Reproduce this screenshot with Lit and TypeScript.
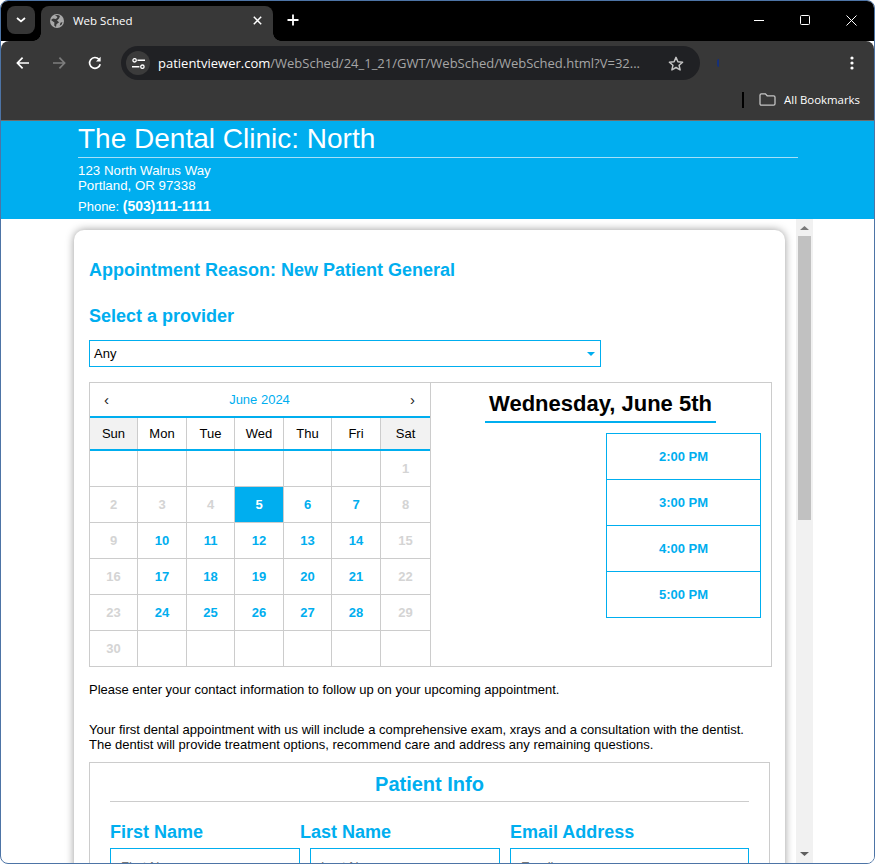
import { LitElement, html, css, svg } from "lit";
import { customElement } from "lit/decorators.js";

const WEEKDAYS = ["Sun", "Mon", "Tue", "Wed", "Thu", "Fri", "Sat"];
const ROWS: (string | number)[][] = [
  ["", "", "", "", "", "", 1],
  [2, 3, 4, 5, 6, 7, 8],
  [9, 10, 11, 12, 13, 14, 15],
  [16, 17, 18, 19, 20, 21, 22],
  [23, 24, 25, 26, 27, 28, 29],
  [30, "", "", "", "", "", ""],
];
const ACTIVE = new Set([5, 6, 7, 10, 11, 12, 13, 14, 17, 18, 19, 20, 21, 24, 25, 26, 27, 28]);
const TIMES = ["2:00 PM", "3:00 PM", "4:00 PM", "5:00 PM"];

@customElement("app-root")
export class AppRoot extends LitElement {
  static styles = css`
    :host { display: block; width: 875px; height: 864px; overflow: hidden; background: #fff; font-family: "Liberation Sans", Arial, sans-serif; }
    * { box-sizing: border-box; }
    svg { display: block; flex: none; }
    .window { width: 875px; height: 864px; border: 1px solid #4d74a6; border-radius: 8px; overflow: hidden; display: flex; flex-direction: column; background: #fff; }

    .strip { height: 40px; flex: none; background: #000; display: flex; align-items: flex-start; padding: 5px 0 0 6px; font-family: "Open Sans", "Noto Sans", sans-serif; color: #fff; }
    .tabsearch { width: 28px; height: 28px; border-radius: 8px; background: #363636; display: flex; align-items: center; justify-content: center; margin-right: 6px; }
    .tab { position: relative; width: 232px; height: 35px; background: #383838; border-radius: 8px 8px 0 0; display: flex; align-items: center; padding: 0 11px 6px 9px; font-size: 11.5px; }
    .tab::before, .tab::after { content: ""; position: absolute; bottom: 0; width: 8px; height: 8px; }
    .tab::before { left: -8px; background: radial-gradient(circle at 0 0, #000 7.5px, #383838 8px); }
    .tab::after { right: -8px; background: radial-gradient(circle at 100% 0, #000 7.5px, #383838 8px); }
    .tab-title { margin-left: 9px; flex: 1; white-space: nowrap; }
    .newtab { margin: 8px 0 0 14px; }
    .winctl { margin-left: auto; display: flex; padding-top: 8px; }
    .winbtn { width: 46px; height: 12px; display: flex; justify-content: center; align-items: center; }

    .toolbar { height: 44px; flex: none; background: #383838; border-radius: 8px 8px 0 0; display: flex; align-items: center; padding-left: 15px; }
    .tool { width: 16px; height: 16px; margin-right: 19px; }
    .omni { width: 579px; height: 34px; border-radius: 17px; background: #202124; display: flex; align-items: center; padding: 0 16px 0 5px; }
    .siteinfo { width: 24px; height: 24px; border-radius: 50%; background: #3b3b3b; display: flex; align-items: center; justify-content: center; flex: none; margin-right: 8px; }
    .url { flex: 1; color: #a6a6a6; white-space: nowrap; font: 13px "Open Sans", "Noto Sans", sans-serif; }
    .url b { color: #fff; font-weight: 400; }
    .sliver { width: 2px; height: 8px; margin-left: 17px; border-radius: 2px 0 0 2px; background: #15307a; }
    .dots { margin-left: auto; margin-right: 20px; }

    .bookmarks { height: 36px; flex: none; background: #383838; border-bottom: 1px solid #6e6e6e; display: flex; align-items: center; justify-content: flex-end; padding: 0 14px 6px 0; font: 11.4px "Open Sans", "Noto Sans", sans-serif; color: #fff; }
    .sep { width: 2px; height: 16px; background: #000; margin-right: 15px; }
    .bm-label { margin-left: 8px; }

    header { height: 98px; flex: none; background: #00aeef; color: #fff; padding-left: 77px; }
    h1 { margin: 0; width: 720px; height: 37px; padding-top: 2px; border-bottom: 1px solid #a6e0f8; font-size: 28px; line-height: 31px; font-weight: 400; white-space: nowrap; }
    .addr { margin-top: 5px; font-size: 13.3px; line-height: 15px; }
    .phone { margin-top: 6px; font-size: 13px; line-height: 15px; }
    .phone b { font-size: 14px; }

    .body { flex: 1; min-height: 0; display: flex; }
    .page { width: 795px; flex: none; overflow: hidden; padding: 11px 0 0 73px; }
    .card { width: 711px; height: 700px; background: #fff; border-radius: 10px 10px 0 0; box-shadow: 0 0 9px rgba(0,0,0,.4); padding: 30px 13px 0 15px; }
    .h { margin: 0; color: #00aeef; font-size: 18px; line-height: 20px; font-weight: 700; white-space: nowrap; }
    .h2 { margin-top: 26px; }
    .select { margin-top: 14px; width: 512px; height: 27px; border: 1px solid #00aeef; display: flex; align-items: center; justify-content: space-between; padding: 0 5px 0 4px; font-size: 13px; color: #000; }
    .caret { width: 0; height: 0; border-left: 4px solid transparent; border-right: 4px solid transparent; border-top: 4px solid #00aeef; }

    .sched { margin-top: 15px; height: 285px; border: 1px solid #ccc; display: flex; }
    .cal { width: 341px; flex: none; border-right: 1px solid #ccc; }
    .calnav { height: 33px; display: flex; justify-content: space-between; align-items: center; padding: 0 15px 0 14px; color: #222; font-size: 15px; }
    .month { color: #00aeef; font-size: 13px; }
    .grid { display: grid; grid-template-columns: 48px 49px 48px 49px 48px 49px 49px; }
    .heads { height: 35px; border-top: 2px solid #00aeef; border-bottom: 2px solid #00aeef; }
    .heads div { font-size: 13px; color: #000; display: flex; align-items: center; justify-content: center; border-right: 1px solid #ccc; }
    .heads div:last-child, .days div:nth-child(7n) { border-right: 0; }
    .heads .wk { background: #f2f2f2; }
    .days { grid-auto-rows: 36px; }
    .days div { font-size: 13px; font-weight: 700; color: #d4d4d4; display: flex; align-items: center; justify-content: center; border-right: 1px solid #ccc; border-bottom: 1px solid #ccc; }
    .days div:nth-last-child(-n+7) { border-bottom-color: transparent; }
    .days .on { color: #00aeef; }
    .days .sel { background: #00aeef; color: #fff; }

    .slots { flex: 1; display: flex; flex-direction: column; align-items: center; }
    .daytitle { margin: 6px 0 0 -1px; padding: 0 4px; height: 34px; border-bottom: 2px solid #00aeef; font-size: 22px; line-height: 29px; font-weight: 700; color: #000; white-space: nowrap; }
    .times { align-self: flex-end; margin: 10px 10px 0 0; width: 155px; border: 1px solid #00aeef; }
    .times div { height: 46px; border-bottom: 1px solid #00aeef; color: #00aeef; font-size: 13px; font-weight: 700; display: flex; align-items: center; justify-content: center; }
    .times div:last-child { height: 45px; border-bottom: 0; }

    .p { margin: 15px 0 0; font-size: 13px; line-height: 15px; color: #000; white-space: nowrap; }
    .p2 { margin-top: 25px; }

    .info { margin-top: 10px; width: 681px; height: 200px; border: 1px solid #ccc; padding: 0 20px; }
    .info h3 { margin: 0; height: 39px; padding-top: 9px; border-bottom: 1px solid #ccc; text-align: center; color: #00aeef; font-size: 20px; line-height: 24px; font-weight: 700; }
    .fields { margin-top: 20px; display: grid; grid-template-columns: 190px 190px 239px; gap: 10px; }
    .shift { margin-left: -10px; }
    .input { margin-top: 6px; height: 34px; border: 1px solid #00aeef; padding: 10px 10px 0; font-size: 13px; line-height: 15px; color: #777; }

    .sb { width: 17px; flex: none; background: #f1f1f1; display: flex; flex-direction: column; align-items: center; padding-top: 7px; }
    .thumb { width: 13px; height: 284px; background: #c1c1c1; margin-top: 6px; }
    .sb svg:last-child { margin-top: auto; margin-bottom: 7px; }
    .rest { flex: 1; background: #fff; }
  `;

  private icon(w: number, h: number, body: unknown) {
    return html`<svg width=${w} height=${h} viewBox="0 0 ${w} ${h}" fill="none">${body}</svg>`;
  }

  private day(d: string | number) {
    const cls = d === 5 ? "sel" : ACTIVE.has(d as number) ? "on" : "";
    return html`<div class=${cls}>${d}</div>`;
  }

  render() {
    return html`
      <div class="window">
        <div class="strip">
          <div class="tabsearch">
            ${this.icon(10, 6, svg`<path d="M1 1l4 3.4L9 1" stroke="#fff" stroke-width="1.8"/>`)}
          </div>
          <div class="tab">
            ${this.icon(14, 14, svg`<circle cx="7" cy="7" r="7" fill="#a8a8a8"/><path d="M5 1.2L7.6 3 6 5 3 4.5 1 6l3.4 2.4-.2 3 1.8 1.6.5-2.8 2.6-2L7 6.5l2-2 1-2.5-2-1zM12.5 8l-2 .8-.8 3 2-1.3z" fill="#383838"/>`)}
            <span class="tab-title">Web Sched</span>
            ${this.icon(9, 9, svg`<path d="M.8.8l7.4 7.4M8.2.8L.8 8.2" stroke="#fff" stroke-width="1.5"/>`)}
          </div>
          <div class="newtab">
            ${this.icon(12, 12, svg`<path d="M6 .5v11M.5 6h11" stroke="#fff" stroke-width="1.8"/>`)}
          </div>
          <div class="winctl">
            <div class="winbtn">${this.icon(10, 1, svg`<path d="M0 .5h10" stroke="#fff"/>`)}</div>
            <div class="winbtn">${this.icon(10, 10, svg`<rect x=".5" y=".5" width="9" height="9" rx="1" stroke="#fff"/>`)}</div>
            <div class="winbtn">${this.icon(11, 11, svg`<path d="M.5.5l10 10M10.5.5l-10 10" stroke="#fff"/>`)}</div>
          </div>
        </div>

        <div class="toolbar">
          <div class="tool">${this.icon(16, 16, svg`<path d="M13 8H2M6.6 2.600L1.400 8l5.200 5.400" stroke="#fff" stroke-width="1.7"/>`)}</div>
          <div class="tool">${this.icon(16, 16, svg`<path d="M2 8h11M8.400 2.600L13.600 8l-5.200 5.400" stroke="#7d7d7d" stroke-width="1.7"/>`)}</div>
          <div class="tool">${this.icon(16, 16, svg`<path d="M14.200 9.200A5.400 5.400 0 1 1 13 4.300" stroke="#fff" stroke-width="1.7"/><path d="M14.600 1.800v4.600H10z" fill="#fff"/>`)}</div>
          <div class="omni">
            <div class="siteinfo">
              ${this.icon(13, 11, svg`<circle cx="2.600" cy="2.300" r="1.700" stroke="#fff" stroke-width="1.300"/><path d="M5.400 2.300H13M0 8.700h7.400" stroke="#fff" stroke-width="1.400"/><circle cx="10.400" cy="8.700" r="1.700" stroke="#fff" stroke-width="1.300"/>`)}
            </div>
            <div class="url"><b>patientviewer.com</b>/WebSched/24_1_21/GWT/WebSched/WebSched.html?V=32...</div>
            ${this.icon(16, 15, svg`<path d="M8 1.400l1.900 4.300 4.700.5-3.500 3.100 1 4.600L8 11.500l-4.100 2.400 1-4.600L1.400 6.200l4.700-.5z" stroke="#c4c4c4" stroke-width="1.5" stroke-linejoin="round"/>`)}
          </div>
          <div class="sliver"></div>
          <div class="dots">${this.icon(4, 14, svg`<circle cx="2" cy="2" r="1.6" fill="#fff"/><circle cx="2" cy="7" r="1.6" fill="#fff"/><circle cx="2" cy="12" r="1.6" fill="#fff"/>`)}</div>
        </div>

        <div class="bookmarks">
          <div class="sep"></div>
          ${this.icon(17, 13, svg`<path d="M1 2.200q0-1.400 1.400-1.400h4l1.800 2h6.400q1.400 0 1.400 1.400v6.600q0 1.400-1.400 1.400H2.400Q1 12.200 1 10.800z" stroke="#c4c4c4" stroke-width="1.3"/>`)}
          <span class="bm-label">All Bookmarks</span>
        </div>

        <header>
          <h1>The Dental Clinic: North</h1>
          <div class="addr">123 North Walrus Way<br />Portland, OR 97338</div>
          <div class="phone">Phone: <b>(503)111-1111</b></div>
        </header>

        <div class="body">
          <div class="page">
            <div class="card">
              <h2 class="h">Appointment Reason: New Patient General</h2>
              <h2 class="h h2">Select a provider</h2>
              <div class="select"><span>Any</span><span class="caret"></span></div>

              <div class="sched">
                <div class="cal">
                  <div class="calnav"><span>‹</span><span class="month">June 2024</span><span>›</span></div>
                  <div class="grid heads">
                    ${WEEKDAYS.map((d, i) => html`<div class=${i === 0 || i === 6 ? "wk" : ""}>${d}</div>`)}
                  </div>
                  <div class="grid days">${ROWS.flat().map((d) => this.day(d))}</div>
                </div>
                <div class="slots">
                  <div class="daytitle">Wednesday, June 5th</div>
                  <div class="times">${TIMES.map((t) => html`<div>${t}</div>`)}</div>
                </div>
              </div>

              <p class="p">Please enter your contact information to follow up on your upcoming appointment.</p>
              <p class="p p2">Your first dental appointment with us will include a comprehensive exam, xrays and a consultation with the dentist.<br />The dentist will provide treatment options, recommend care and address any remaining questions.</p>

              <div class="info">
                <h3>Patient Info</h3>
                <div class="fields">
                  <div><div class="h">First Name</div><div class="input">First Name</div></div>
                  <div><div class="h shift">Last Name</div><div class="input">Last Name</div></div>
                  <div><div class="h">Email Address</div><div class="input">Email</div></div>
                </div>
              </div>
            </div>
          </div>
          <div class="sb">
            ${this.icon(9, 4, svg`<path d="M4.500 0L9 4H0z" fill="#7a7a7a"/>`)}
            <div class="thumb"></div>
            ${this.icon(9, 4, svg`<path d="M0 0h9L4.500 4z" fill="#5f5f5f"/>`)}
          </div>
          <div class="rest"></div>
        </div>
      </div>
    `;
  }
}
